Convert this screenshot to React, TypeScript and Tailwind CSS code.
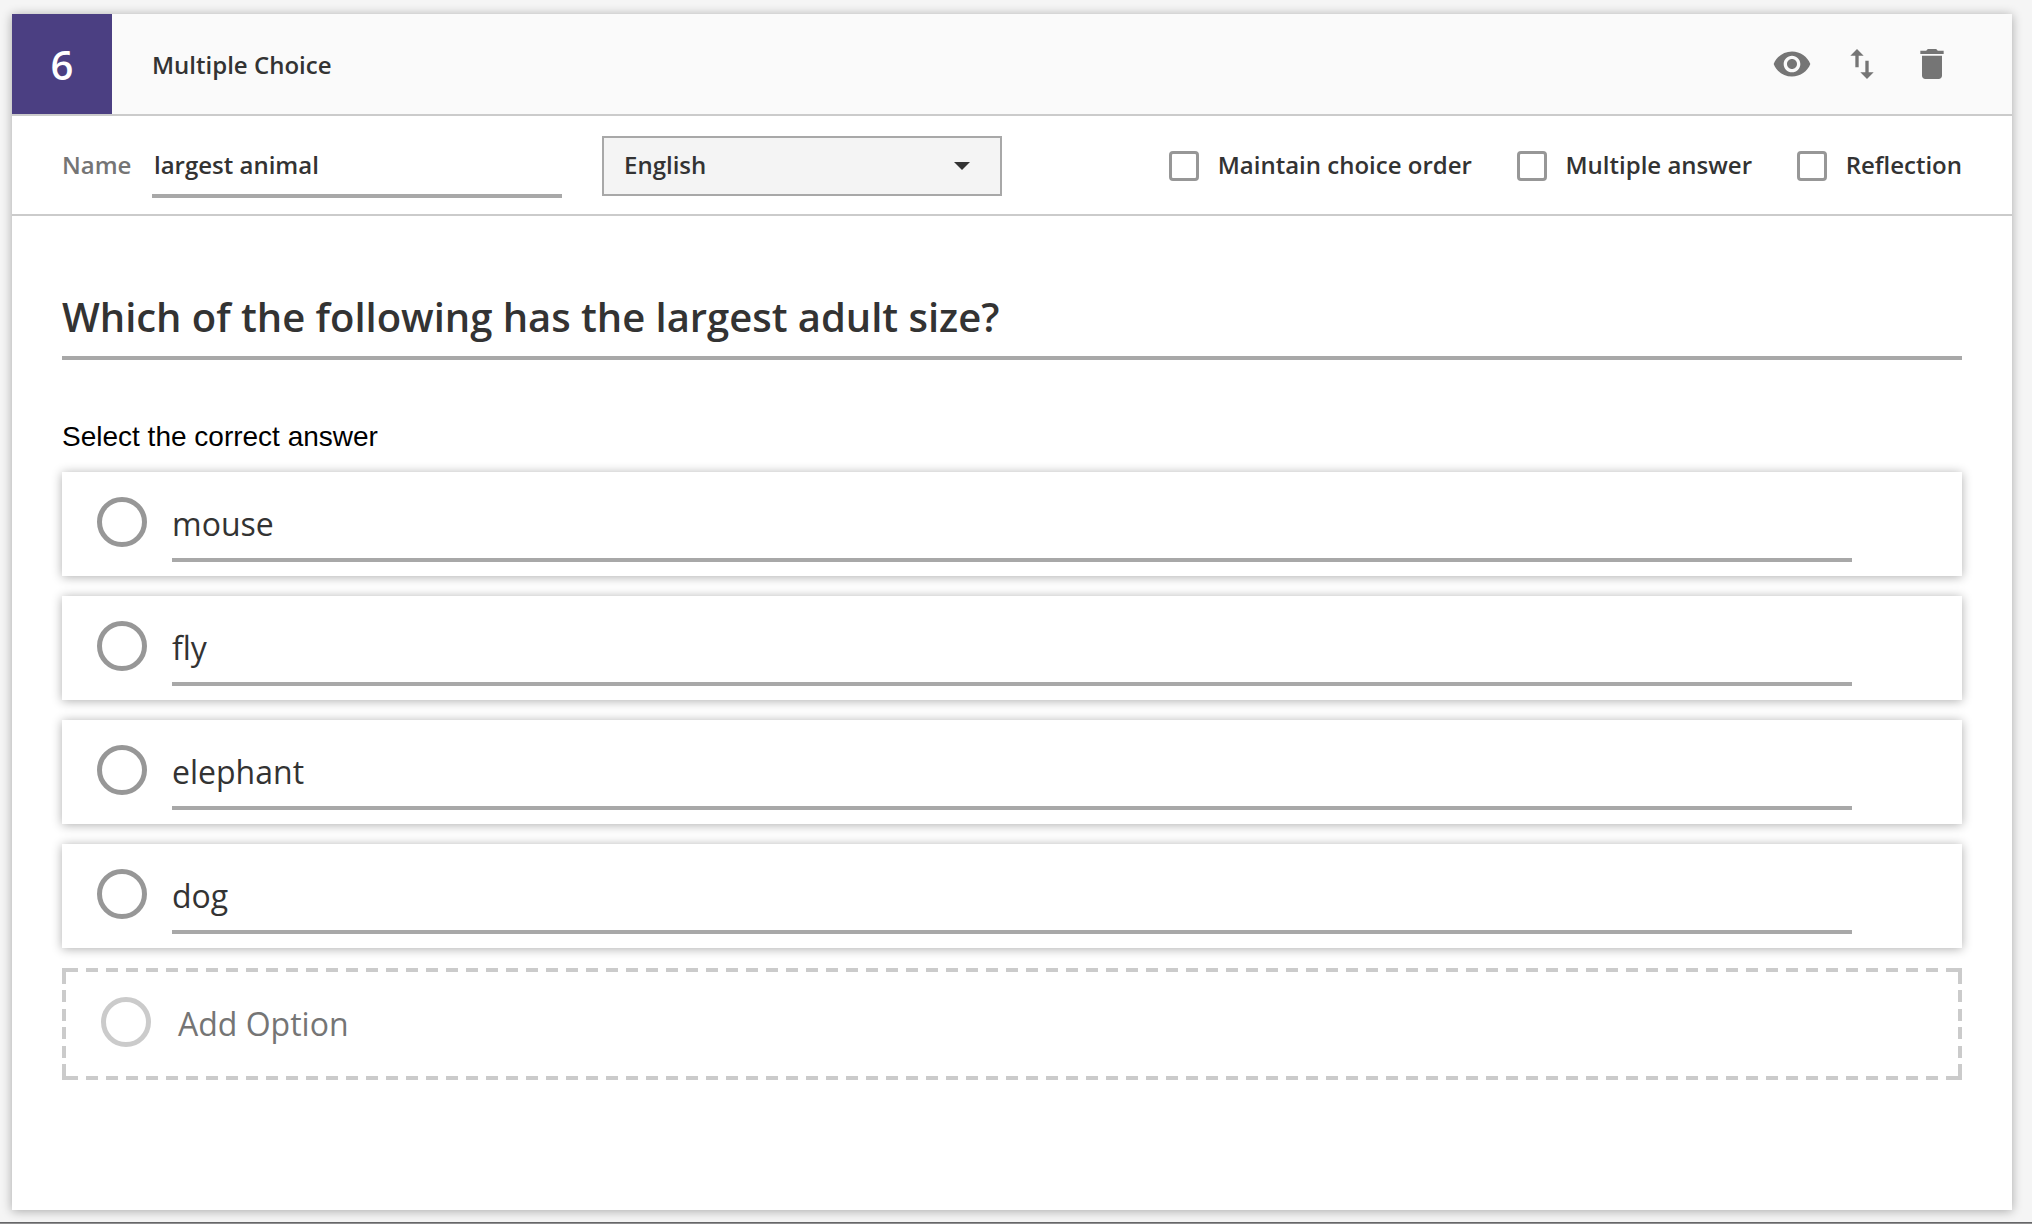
import type { ReactNode } from 'react';

const options = ['mouse', 'fly', 'elephant', 'dog'];
const settings = ['Maintain choice order', 'Multiple answer', 'Reflection'];

const cardShadow = 'shadow-[0_1px_10px_rgba(0,0,0,0.32)]';

function Icon({ d }: { d: string }) {
  return (
    <svg viewBox="0 0 24 24" className="size-10 fill-[#757575]">
      <path d={d} />
    </svg>
  );
}

function Checkbox({ label }: { label: string }) {
  return (
    <label className="flex items-center gap-[18.6px]">
      <span className="mt-[2px] size-[30px] rounded-[4px] border-[3px] border-[#979797]" />
      <span className="pb-px leading-[33px]">{label}</span>
    </label>
  );
}

function Header() {
  return (
    <header className="flex h-[102px] items-center border-b-2 border-[#cbcbcb] bg-[#fafafa]">
      <div className="flex size-[100px] items-center justify-center bg-[#4b3f82] text-[40px] leading-[55px] text-white">
        6
      </div>
      <h2 className="ml-10 pt-px leading-[33px]">Multiple Choice</h2>
      <div className="mr-[60px] ml-auto flex gap-[30px]">
        <Icon d="M12 4.5C7 4.5 2.73 7.61 1 12c1.73 4.39 6 7.5 11 7.5s9.27-3.11 11-7.5c-1.73-4.39-6-7.5-11-7.5zM12 17c-2.76 0-5-2.24-5-5s2.24-5 5-5 5 2.24 5 5-2.24 5-5 5zm0-8c-1.66 0-3 1.34-3 3s1.34 3 3 3 3-1.34 3-3-1.34-3-3-3z" />
        <Icon d="M16 17.01V10h-2v7.01h-3L15 21l4-3.99h-3zM9 3L5 6.99h3V14h2V6.99h3L9 3z" />
        <Icon d="M6 19c0 1.1.9 2 2 2h8c1.1 0 2-.9 2-2V7H6v12zM19 4h-3.5l-1-1h-5l-1 1H5v2h14V4z" />
      </div>
    </header>
  );
}

function Toolbar() {
  return (
    <div className="flex h-[100px] items-center border-b-2 border-[#cbcbcb] px-[50px]">
      <span className="w-[90px] text-[#757575]">Name</span>
      <div className="mt-px flex h-[65px] w-[410px] items-center border-b-4 border-[#a8a8a8] px-0.5 pt-px">
        <span className="leading-[33px]">largest animal</span>
      </div>
      <div className="mt-0.5 ml-10 flex h-[60px] w-[400px] items-center justify-between border-2 border-[#a8a8a8] bg-[#f4f4f4] pr-[30px] pl-5">
        <span className="pb-1 leading-[33px]">English</span>
        <svg viewBox="0 0 16 8" className="h-2 w-4 fill-[#333333]">
          <path d="M0 0h16L8 8z" />
        </svg>
      </div>
      <div className="ml-auto flex gap-[45px]">
        {settings.map((s) => (
          <Checkbox key={s} label={s} />
        ))}
      </div>
    </div>
  );
}

function Option({ children }: { children: ReactNode }) {
  return (
    <li className={`flex h-[104px] bg-white pl-[35px] ${cardShadow}`}>
      <span className="mt-[25px] size-[50px] rounded-full border-[5px] border-[#979797]" />
      <div className="ml-[25px] h-[90px] w-[1680px] border-b-4 border-[#a8a8a8] pt-[30px] text-[32px] leading-[43px] font-normal">
        {children}
      </div>
    </li>
  );
}

/* Dashed frame: 12px dashes separated by 8px gaps, joined at the corners. */
function AddOption() {
  return (
    <div className="mt-5 grid h-[112px] grid-cols-[4px_1fr_4px] grid-rows-[4px_1fr_4px]">
      <div className="bg-[#cbcbcb]" />
      <div className="bg-[repeating-linear-gradient(90deg,#cbcbcb_0_12px,transparent_12px_20px)]" />
      <div className="bg-[#cbcbcb]" />
      <div className="bg-[repeating-linear-gradient(180deg,#cbcbcb_0_12px,transparent_12px_18.4px)]" />
      <div className="flex pl-[35px]">
        <span className="mt-[25px] size-[50px] rounded-full border-[5px] border-[#cbcbcb]" />
        <span className="mt-[30px] ml-[27px] text-[32px] leading-[43px] font-normal text-[#757575]">Add Option</span>
      </div>
      <div className="bg-[repeating-linear-gradient(180deg,#cbcbcb_0_12px,transparent_12px_18.4px)]" />
      <div className="bg-[#cbcbcb]" />
      <div className="bg-[repeating-linear-gradient(90deg,#cbcbcb_0_12px,transparent_12px_20px)]" />
      <div className="bg-[#cbcbcb]" />
    </div>
  );
}

export default function App() {
  return (
    <div className="flex h-[1224px] w-[2032px] flex-col overflow-hidden bg-[#f5f5f5] pt-[14px] font-['Open_Sans',sans-serif] text-[24px] font-semibold text-[#333333]">
      <main className={`ml-3 h-[1196px] w-[2000px] bg-white ${cardShadow}`}>
        <Header />
        <Toolbar />
        <section className="px-[50px] pt-[73px]">
          <h1 className="h-[71px] border-b-4 border-[#a8a8a8] text-[40px] leading-[55px] tracking-[-0.03px]">
            Which of the following has the largest adult size?
          </h1>
          <p className="mt-[61px] font-['Liberation_Sans',sans-serif] text-[28px] leading-[31px] font-normal text-black">
            Select the correct answer
          </p>
          <ul className="mt-5 flex flex-col gap-5">
            {options.map((o) => (
              <Option key={o}>{o}</Option>
            ))}
          </ul>
          <AddOption />
        </section>
      </main>
      <div className="mt-auto h-0.5 border-t border-[#666668] bg-[#8f8f90]" />
    </div>
  );
}
